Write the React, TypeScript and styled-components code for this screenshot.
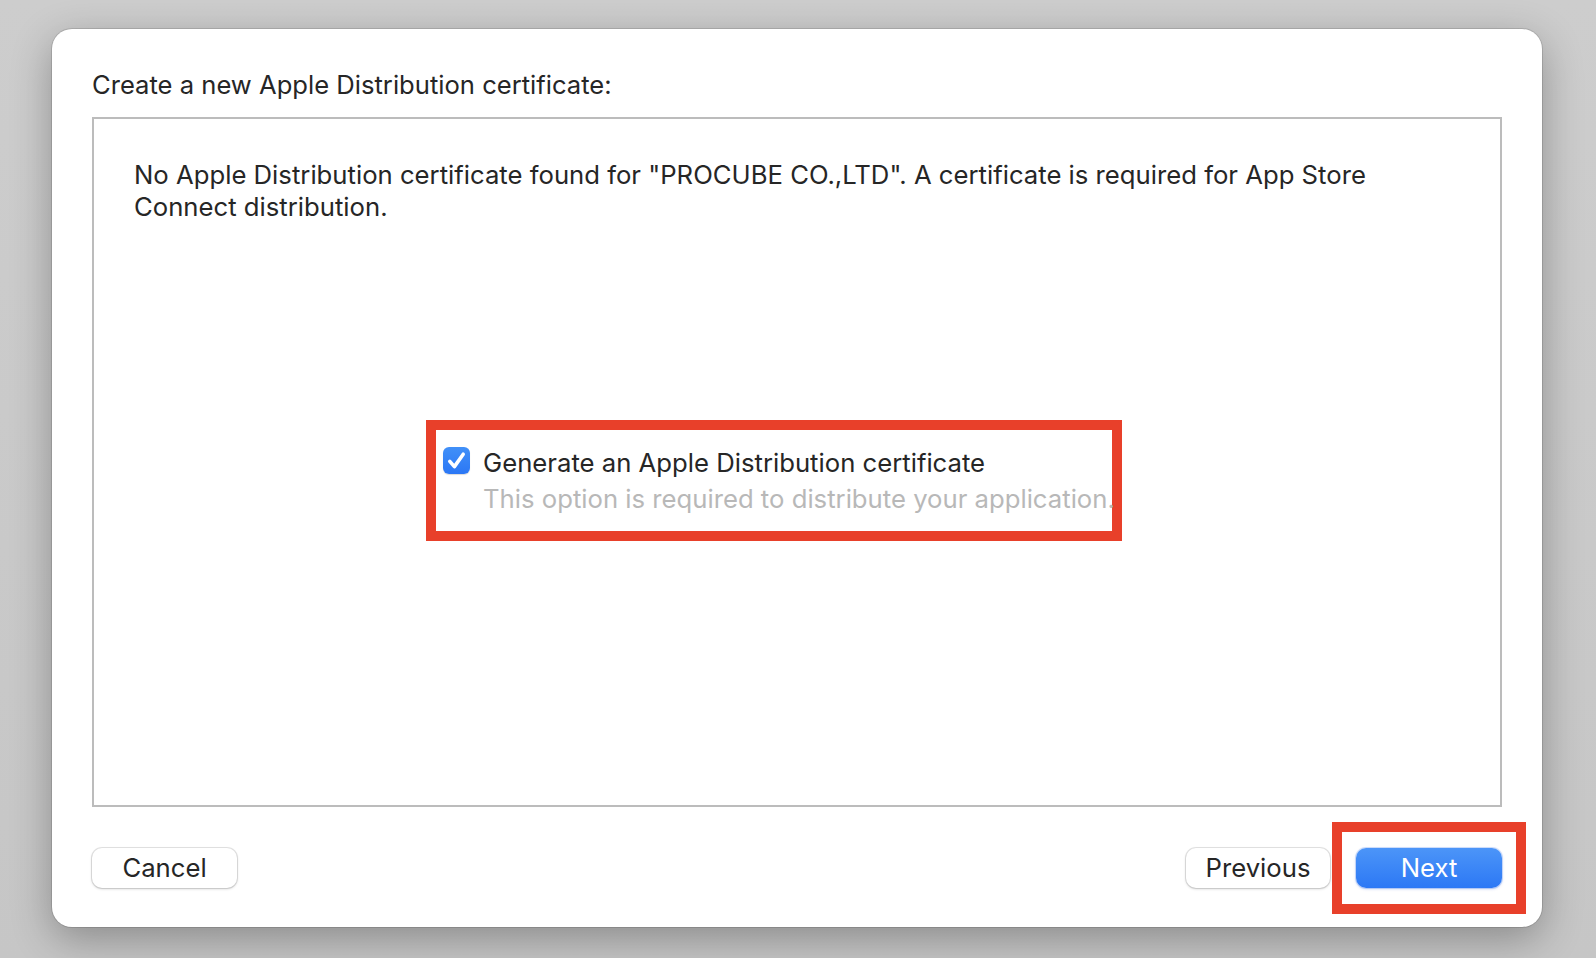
import React from "react";
import styled, { createGlobalStyle } from "styled-components";

const GlobalStyle = createGlobalStyle`
  html, body {
    margin: 0;
    padding: 0;
    background: #c9c9c9;
  }
  * { box-sizing: border-box; }
`;

const Page = styled.div`
  width: 1596px;
  height: 958px;
  padding: 29px 54px 31px 52px;
  display: flex;
  background: linear-gradient(180deg, #cdcdcd 0%, #c6c6c6 100%);
  font-family: Inter, "Noto Sans", sans-serif;
  color: #262626;
`;

const Dialog = styled.div`
  flex: 1;
  display: flex;
  flex-direction: column;
  background: #ffffff;
  border-radius: 20px;
  padding: 41px 40px 39px 40px;
  box-shadow: 0 0 0 1px rgba(0, 0, 0, 0.12), 0 12px 40px rgba(0, 0, 0, 0.3);
`;

const Title = styled.h1`
  margin: 0;
  font-size: 25.6px;
  font-weight: 400;
  line-height: 30px;
  letter-spacing: 0;
`;

const ContentBox = styled.div`
  margin-top: 17px;
  height: 690px;
  border: 2px solid #bcbcbc;
  padding: 40px 40px 0 40px;
  display: flex;
  flex-direction: column;
`;

const Message = styled.p`
  margin: 0;
  font-size: 25.7px;
  line-height: 31.5px;
`;

const Highlight = styled.div`
  margin-top: 198px;
  margin-left: 292px;
  width: 696px;
  height: 121px;
  border: 10px solid #e8402a;
  padding: 17px 0 0 7px;
  display: grid;
  grid-template-columns: 27px 1fr;
  align-content: start;
  column-gap: 13px;
  row-gap: 4px;
`;

const CheckBox = styled.span`
  width: 27px;
  height: 27px;
  border-radius: 6px;
  background: linear-gradient(180deg, #4190f8 0%, #2b77f5 100%);
  box-shadow: 0 1px 1px rgba(0, 0, 0, 0.15);
  display: flex;
  align-items: center;
  justify-content: center;
`;

const OptionLabel = styled.div`
  font-size: 25.7px;
  line-height: 32px;
  white-space: nowrap;
`;

const OptionHint = styled.div`
  grid-column: 2;
  font-size: 25.7px;
  line-height: 32px;
  color: #b8b8b8;
  white-space: nowrap;
`;

const Footer = styled.div`
  margin-top: 41px;
  display: flex;
  align-items: center;
`;

const Spacer = styled.div`
  flex: 1;
`;

const Button = styled.button<{ $primary?: boolean; $width: number }>`
  width: ${(p) => p.$width}px;
  height: 40px;
  border: none;
  border-radius: 10px;
  font-family: Inter, "Noto Sans", sans-serif;
  font-size: 25.7px;
  line-height: 40px;
  padding: 0;
  color: ${(p) => (p.$primary ? "#ffffff" : "#262626")};
  background: ${(p) =>
    p.$primary ? "linear-gradient(180deg, #4c95f8 0%, #2c78f5 100%)" : "#ffffff"};
  box-shadow: ${(p) =>
    p.$primary
      ? "0 0 0 1px rgba(40, 110, 240, 0.2), 0 1px 3px rgba(0, 60, 200, 0.25)"
      : "0 0 0 1px rgba(0, 0, 0, 0.1), 0 1px 3px rgba(0, 0, 0, 0.18)"};
`;

const NextWrap = styled.span`
  position: relative;
  margin-left: 26px;
  display: inline-flex;
  &::after {
    content: "";
    position: absolute;
    top: -26px;
    bottom: -26px;
    left: -24px;
    right: -24px;
    border: 10px solid #e8402a;
    pointer-events: none;
  }
`;

export default function App() {
  return (
    <>
      <GlobalStyle />
      <Page>
        <Dialog>
          <Title>Create a new Apple Distribution certificate:</Title>
          <ContentBox>
            <Message>
              No Apple Distribution certificate found for "PROCUBE CO.,LTD". A certificate is required for App Store
              <br />
              Connect distribution.
            </Message>
            <Highlight>
              <CheckBox>
                <svg width="27" height="27" viewBox="0 0 27 27">
                  <path
                    d="M6.8 14.4 L11.4 19.6 L20.2 7.2"
                    fill="none"
                    stroke="#ffffff"
                    strokeWidth="3.6"
                    strokeLinecap="round"
                    strokeLinejoin="round"
                  />
                </svg>
              </CheckBox>
              <OptionLabel>Generate an Apple Distribution certificate</OptionLabel>
              <OptionHint>This option is required to distribute your application.</OptionHint>
            </Highlight>
          </ContentBox>
          <Footer>
            <Button $width={145}>Cancel</Button>
            <Spacer />
            <Button $width={144}>Previous</Button>
            <NextWrap>
              <Button $primary $width={146}>Next</Button>
            </NextWrap>
          </Footer>
        </Dialog>
      </Page>
    </>
  );
}
